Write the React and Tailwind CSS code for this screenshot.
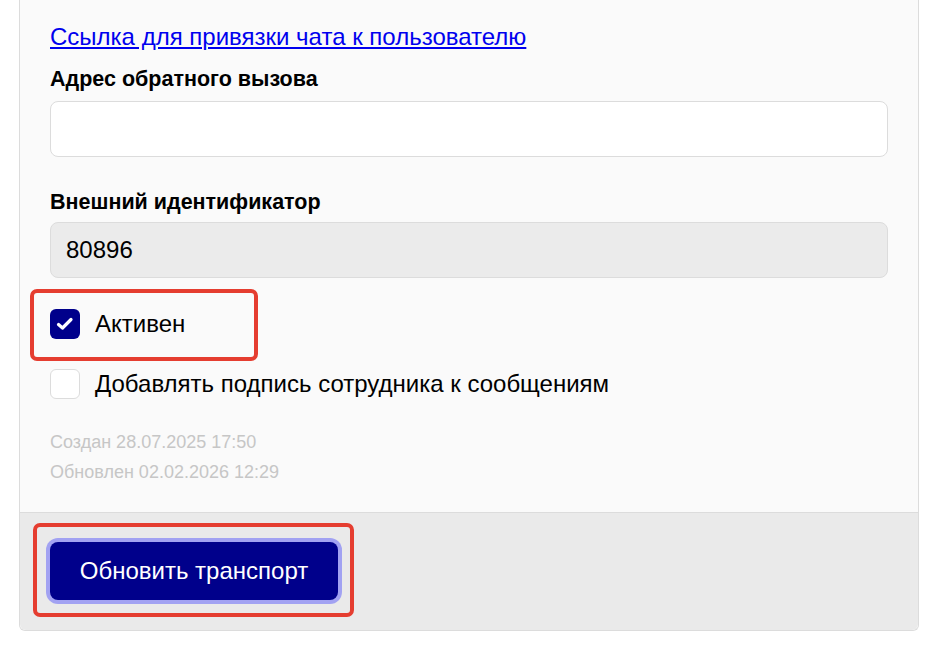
import React from "react";

export default function App() {
  return (
    <div className="min-h-[647px] bg-white font-['Liberation_Sans',Arial,sans-serif] text-black">
      <div className="ml-[19px] w-[900px] rounded-b-[6px] border border-t-0 border-[#dcdcdc] bg-[#fafafa]">
        <div className="relative px-[30px] pt-[19px] pb-[25px]">
          <a href="#" className="block text-[24px] leading-[36px] text-[#0000ee] underline underline-offset-[2px]">
            Ссылка для привязки чата к пользователю
          </a>
          <div className="mt-[9px] text-[21.5px] font-bold leading-[30px]">Адрес обратного вызова</div>
          <input
            className="mt-[7px] block h-[56px] w-full rounded-[8px] border border-[#dcdcdc] bg-white px-[15px] text-[24px] outline-none"
            defaultValue=""
          />
          <div className="mt-[30px] text-[21.5px] font-bold leading-[30px]">Внешний идентификатор</div>
          <input
            className="mt-[5px] block h-[56px] w-full rounded-[8px] border border-[#dcdcdc] bg-[#ebebeb] px-[15px] text-[24px] outline-none"
            defaultValue="80896"
            readOnly
          />
          <div className="relative mt-[28px] flex h-[36px] items-center gap-[15px]">
            <span className="flex h-[30px] w-[30px] items-center justify-center rounded-[6px] bg-[#00008b]">
              <svg width="18" height="14" viewBox="0 0 18 14" fill="none">
                <path d="M2.5 7.5 L6.5 11 L15 2.5" stroke="white" strokeWidth="3.2" strokeLinecap="round" strokeLinejoin="round" />
              </svg>
            </span>
            <span className="text-[24px] leading-[36px]">Активен</span>
            <div className="pointer-events-none absolute left-[-20px] top-[-17px] h-[72px] w-[228px] rounded-[7px] border-[4px] border-[#e53d30]" />
          </div>
          <div className="mt-[24px] flex h-[36px] items-center gap-[15px]">
            <span className="h-[30px] w-[30px] rounded-[6px] border border-[#dcdcdc] bg-white" />
            <span className="text-[24px] leading-[36px]">Добавлять подпись сотрудника к сообщениям</span>
          </div>
          <div className="mt-[25px] text-[18px] leading-[30px] text-[#c6c6c6]">
            <div>Создан 28.07.2025 17:50</div>
            <div>Обновлен 02.02.2026 12:29</div>
          </div>
        </div>
        <div className="rounded-b-[6px] border-t border-[#dcdcdc] bg-[#eaeaea] px-[30px] pt-[29px] pb-[30px]">
          <div className="relative inline-block">
            <button className="h-[58px] w-[288px] rounded-[8px] bg-[#00008b] text-[24px] text-white shadow-[0_0_0_4px_#a2a2f2]">
              Обновить транспорт
            </button>
            <div className="pointer-events-none absolute left-[-17px] top-[-19px] h-[94px] w-[321px] rounded-[7px] border-[4px] border-[#e53d30]" />
          </div>
        </div>
      </div>
    </div>
  );
}
